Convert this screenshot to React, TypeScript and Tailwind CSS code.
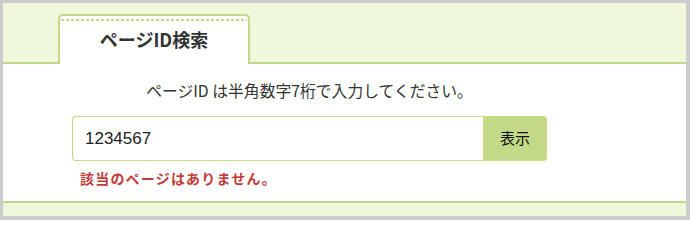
export default function App() {
  return (
    <div
      className="flex h-[220px] w-[690px] flex-col border-[3px] border-r-4 border-b-4 border-[#cccccc] bg-white text-[#333333]"
      style={{ fontFamily: '"Noto Sans CJK JP", "Noto Sans", sans-serif' }}
    >
      {/* tab bar */}
      <div className="flex h-[61px] items-end border-b-2 border-[#c3d987] bg-[#f0f8dc] pl-[55px]">
        <div className="-mb-[2px] flex h-[50px] w-[192px] flex-col rounded-t-[5px] border-2 border-b-0 border-[#c3d987] bg-white">
          <div className="mx-[1px] mt-[3px] h-[2px] bg-[linear-gradient(to_right,#c3d987_3px,transparent_3px)] bg-[length:5px_2px]" />
          <div className="flex flex-1 items-center justify-center pb-[6px] text-[18px] font-bold text-[#333333]">
            ページID検索
          </div>
        </div>
      </div>

      {/* search form */}
      <div className="flex-1 pl-[69px] pt-[16px]">
        <div className="w-[475px]">
          <p className="text-center text-[15.8px] leading-[22px] text-[#333333]">
            ページID は半角数字7桁で入力してください。
          </p>
          <div className="mt-[14px] flex h-[45px]">
            <input
              defaultValue="1234567"
              className="min-w-0 flex-1 rounded-l-[4px] border border-r-0 border-[#c3d987] bg-white pl-[12px] font-['Liberation_Sans',sans-serif] text-[17px] text-[#222222] outline-none"
            />
            <button className="w-[64px] rounded-r-[4px] bg-[#c3d987] text-[15px] text-[#111111]">
              表示
            </button>
          </div>
          <p className="mt-[7px] pl-[8px] text-[14px] font-bold leading-[20px] tracking-[1.2px] text-[#c23b3b]">
            該当のページはありません。
          </p>
        </div>
      </div>

      {/* bottom band */}
      <div className="h-[15px] border-t-2 border-[#c3d987] bg-[#f0f8dc]" />
    </div>
  );
}
